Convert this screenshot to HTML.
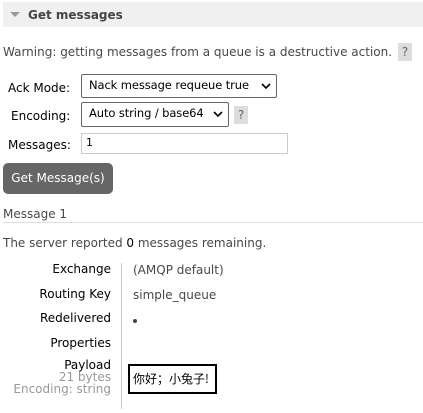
<!DOCTYPE html>
<html><head><meta charset="utf-8"><style>
*{margin:0;padding:0;box-sizing:border-box}
body{width:423px;height:413px;background:#fff;font-family:"DejaVu Sans","Liberation Sans","Noto Sans CJK SC",sans-serif;font-size:12px;color:#484848;position:relative;overflow:hidden;letter-spacing:0}
.a{position:absolute;white-space:nowrap;line-height:14px}
.hdr{position:absolute;left:3px;top:2px;width:420px;height:25px;background:#f0f0f0}
.tri{position:absolute;left:10px;top:12px;width:0;height:0;border-left:5px solid transparent;border-right:5px solid transparent;border-top:5px solid #999}
.q{position:absolute;background:#ddd;color:#666;text-align:center;line-height:18px}
.sel{position:absolute;border:1px solid #666;border-radius:2px;background:#fff;color:#000;font-size:11.5px;padding-left:7px;line-height:21px;letter-spacing:-0.1px}
.sel svg{position:absolute;right:5px;top:8px}
.lab{color:#000;text-align:right;width:108px;left:3px}
</style></head><body>
<div class="hdr"></div><div class="tri"></div>
<div class="a" style="left:28px;top:8px;font-weight:bold;font-size:12px;color:#444">Get messages</div>
<div class="a" style="left:3px;top:45px">Warning: getting messages from a queue is a destructive action.</div>
<div class="q" style="left:398px;top:43px;width:14px;height:18px">?</div>
<div class="a" style="left:8px;top:81px;color:#000;font-size:12px">Ack Mode:</div>
<div class="sel" style="left:81px;top:74px;width:196px;height:24px">Nack message requeue true<svg width="10" height="7"><path d="M1 1L5 5L9 1" stroke="#000" stroke-width="1.6" fill="none"/></svg></div>
<div class="a" style="left:11px;top:109px;color:#000;font-size:12px">Encoding:</div>
<div class="sel" style="left:81px;top:102px;width:148px;height:25px">Auto string / base64<svg width="10" height="7"><path d="M1 1L5 5L9 1" stroke="#000" stroke-width="1.6" fill="none"/></svg></div>
<div class="q" style="left:234px;top:106px;width:14px;height:18px">?</div>
<div class="a" style="left:8px;top:138px;color:#000;font-size:12px">Messages:</div>
<div style="position:absolute;left:81px;top:133px;width:207px;height:21px;border:1px solid #ccc;color:#000;padding:2px 4px;font-size:11px">1</div>
<div style="position:absolute;left:3px;top:163px;width:110px;height:31px;background:#666;border-radius:5px;color:#fff;font-size:12px;line-height:31px;text-align:center;letter-spacing:0">Get Message(s)</div>
<div class="a" style="left:3px;top:207px">Message 1</div>
<div style="position:absolute;left:3px;top:222px;width:420px;height:1px;background:#ddd"></div>
<div class="a" style="left:3px;top:236px">The server reported <span style="color:#000">0</span> messages remaining.</div>
<div style="position:absolute;left:121px;top:263px;width:1px;height:146px;background:#ccc"></div>
<div class="a lab" style="top:262px">Exchange</div>
<div class="a lab" style="top:287px">Routing Key</div>
<div class="a lab" style="top:311px">Redelivered</div>
<div class="a lab" style="top:336px">Properties</div>
<div class="a lab" style="top:358px">Payload</div>
<div class="a lab" style="top:371px;color:#999;line-height:12px">21 bytes</div>
<div class="a lab" style="top:383px;color:#999;line-height:12px">Encoding: string</div>
<div class="a" style="left:133px;top:263px">(AMQP default)</div>
<div class="a" style="left:133px;top:288px">simple_queue</div>
<div style="position:absolute;left:133px;top:319px;width:4px;height:4px;border-radius:2px;background:#444"></div>
<div style="position:absolute;left:128px;top:364px;width:89px;height:30px;border:2px solid #000;color:#000;font-family:'WenQuanYi Zen Hei','Noto Sans CJK SC',sans-serif;font-size:12px;line-height:26px;padding-left:3px;letter-spacing:0">你好；小兔子!</div>
</body></html>
